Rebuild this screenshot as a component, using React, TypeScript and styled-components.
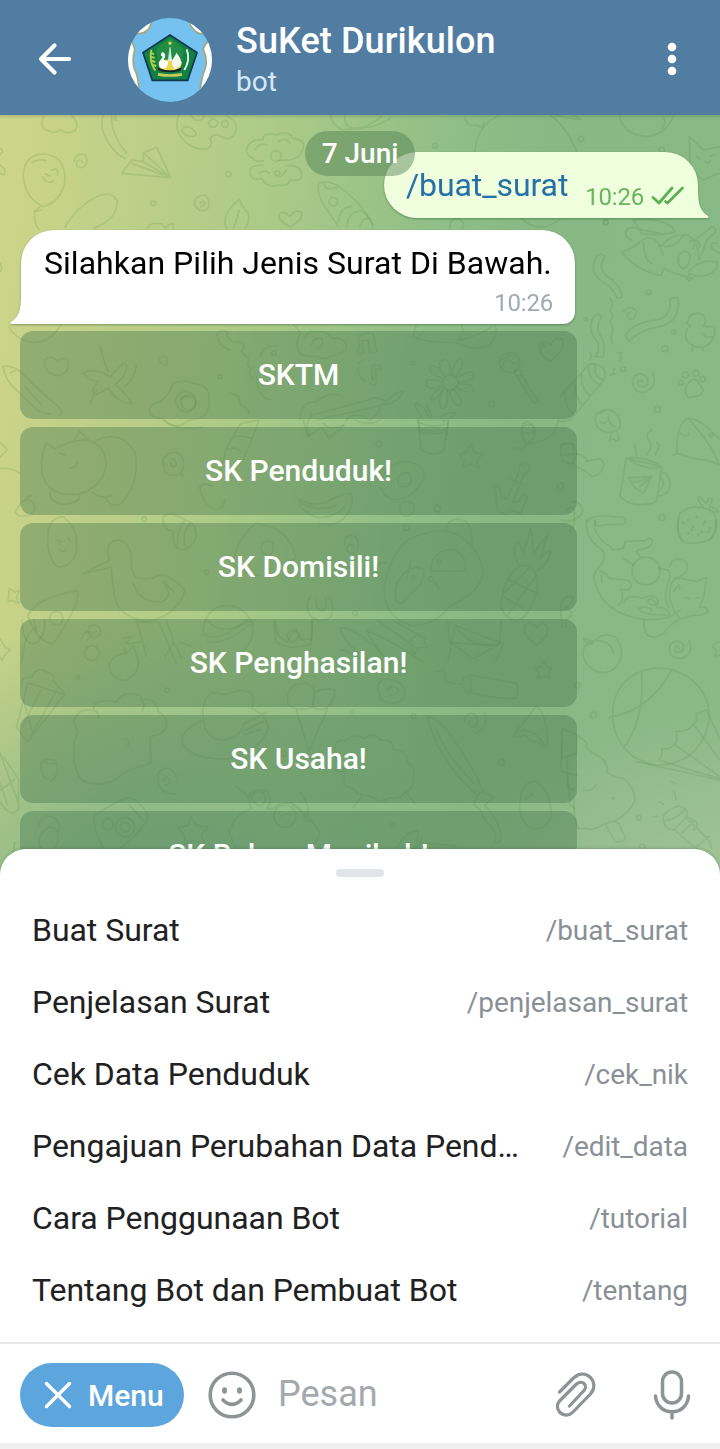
import React from 'react';
import styled, { createGlobalStyle } from 'styled-components';

const GlobalStyle = createGlobalStyle`
  * { box-sizing: border-box; }
  html, body { margin: 0; padding: 0; background: #fff; }
  body { font-family: Roboto, 'Noto Sans', sans-serif; overflow: hidden; }
`;

const Screen = styled.main`
  width: 720px;
  height: 1449px;
  display: flex;
  flex-direction: column;
  overflow: hidden;
  background: #fff;
`;

/* ---------- header ---------- */

const Header = styled.header`
  height: 115px;
  flex: none;
  display: flex;
  align-items: flex-start;
  background: #517da2;
  color: #fff;
  padding: 18px 36px 0 36px;
`;

const BackIcon = styled.svg`
  width: 38px;
  height: 38px;
  margin: 22px 54px 0 0;
`;

const Avatar = styled.svg`
  width: 84px;
  height: 84px;
  border-radius: 50%;
`;

const Heading = styled.div`
  flex: 1;
  margin-left: 24px;
`;

const Title = styled.h1`
  margin: 1px 0 0;
  font-size: 36px;
  line-height: 44px;
  font-weight: 500;
  letter-spacing: 0.1px;
`;

const Status = styled.div`
  font-size: 28px;
  line-height: 38px;
  color: #d5e8f7;
`;

const DotsIcon = styled.svg`
  width: 24px;
  height: 40px;
  margin-top: 21px;
`;

/* ---------- chat ---------- */

const Chat = styled.section`
  position: relative;
  height: 766px;
  margin-bottom: -32px;
  flex: none;
  display: flex;
  flex-direction: column;
  padding-top: 37px;
  overflow: hidden;
  background:
    linear-gradient(180deg, rgba(0, 0, 0, 0.12), rgba(0, 0, 0, 0) 4px),
    radial-gradient(ellipse 330px 220px at 760px 800px, rgba(176, 200, 160, 0.85), rgba(160, 194, 146, 0) 100%),
    radial-gradient(ellipse 330px 300px at 130px 800px, rgba(118, 175, 136, 0.9), rgba(130, 180, 134, 0) 100%),
    linear-gradient(97deg, #ccd68a 0%, #c6d288 9%, #aecb88 32%, #90bf87 55%, #88b884 68%, #89b985 100%);
`;

const Wallpaper = styled.svg`
  position: absolute;
  left: 0;
  top: 0;
  width: 720px;
  height: 754px;
  fill: none;
  stroke: #48823c;
  stroke-opacity: 0.16;
  stroke-width: 1.7px;
  stroke-linecap: round;
  stroke-linejoin: round;
  path, circle, ellipse { vector-effect: non-scaling-stroke; }
`;

const DatePill = styled.div`
  position: absolute;
  top: 16px;
  left: 305px;
  width: 110px;
  height: 45px;
  border-radius: 23px;
  background: rgba(74, 122, 80, 0.44);
  color: #fff;
  font-size: 28px;
  font-weight: 500;
  line-height: 45px;
  text-align: center;
  z-index: 2;
`;

const MessageRow = styled.div<{ $out?: boolean }>`
  position: relative;
  display: flex;
  align-items: flex-end;
  justify-content: ${p => (p.$out ? 'flex-end' : 'flex-start')};
  padding: ${p => (p.$out ? '0 11px 0 0' : '0 0 0 10px')};
  margin-bottom: ${p => (p.$out ? 12 : 7)}px;
  filter: drop-shadow(0 1px 1px rgba(40, 80, 40, 0.45));
`;

const Tail = styled.svg`
  width: 11px;
  height: 30px;
  flex: none;
`;

const OutBubble = styled.div`
  width: 314px;
  height: 66px;
  border-radius: 33px 33px 0 33px;
  background: #effedd;
  display: flex;
  align-items: flex-end;
  padding: 0 13px 0 22px;
`;

const Command = styled.span`
  font-size: 32px;
  line-height: 66px;
  letter-spacing: -0.1px;
  color: #2670a8;
  flex: 1;
`;

const SentTime = styled.span`
  font-size: 24px;
  line-height: 42px;
  letter-spacing: -0.2px;
  color: #6bb45e;
`;

const Checks = styled.svg`
  width: 34px;
  height: 20px;
  margin: 0 0 12px 7px;
`;

const InBubble = styled.div`
  width: 554px;
  height: 94px;
  border-radius: 33px 33px 12px 0;
  background: #fff;
  display: flex;
  flex-direction: column;
  padding: 14px 22px 0 23px;
`;

const MessageText = styled.p`
  margin: 0;
  font-size: 32px;
  line-height: 38px;
  letter-spacing: 0.03px;
  color: #000;
  white-space: nowrap;
`;

const ReceivedTime = styled.span`
  align-self: flex-end;
  font-size: 24px;
  line-height: 28px;
  letter-spacing: -0.2px;
  margin-top: 7px;
  color: #a1aab3;
`;

const Keyboard = styled.div`
  position: relative;
  display: flex;
  flex-direction: column;
  gap: 8px;
  width: 557px;
  margin-left: 20px;
`;

const KeyboardButton = styled.button`
  height: 88px;
  flex: none;
  border: 0;
  border-radius: 13px;
  background: rgba(74, 122, 80, 0.42);
  color: #fff;
  font-family: inherit;
  font-size: 30px;
  font-weight: 500;
  padding: 0 0 2px;
`;

/* ---------- bot command sheet ---------- */

const Sheet = styled.section`
  position: relative;
  z-index: 3;
  height: 493px;
  flex: none;
  border-radius: 26px 26px 0 0;
  background: #fff;
  box-shadow: 0 -1px 3px rgba(40, 80, 50, 0.25);
  display: flex;
  flex-direction: column;
`;

const Handle = styled.div`
  width: 48px;
  height: 8px;
  border-radius: 4px;
  background: #e1e4e8;
  margin: 20px auto 17px;
`;

const CommandRow = styled.div`
  height: 72px;
  display: flex;
  align-items: center;
  justify-content: space-between;
  padding: 0 32px;
`;

const CommandName = styled.span`
  font-size: 32px;
  letter-spacing: -0.04px;
  color: #212121;
  white-space: nowrap;
`;

const CommandSlug = styled.span`
  font-size: 28px;
  letter-spacing: -0.06px;
  color: #8a9096;
  white-space: nowrap;
`;

/* ---------- composer ---------- */

const Composer = styled.footer`
  height: 107px;
  flex: none;
  position: relative;
  z-index: 3;
  display: flex;
  align-items: flex-start;
  border-top: 2px solid #e6e7e9;
  border-bottom: 6px solid #f0f0f0;
  background: #fff;
  padding: 19px 20px 0;
`;

const MenuButton = styled.button`
  width: 164px;
  height: 64px;
  border: 0;
  border-radius: 32px;
  background: #5da5dd;
  color: #fff;
  display: flex;
  align-items: center;
  font-family: inherit;
  font-size: 30px;
  font-weight: 500;
  padding: 0 0 0 24px;
  gap: 16px;
`;

const CrossIcon = styled.svg`
  width: 28px;
  height: 28px;
`;

const SmileIcon = styled.svg`
  width: 48px;
  height: 48px;
  margin: 8px 0 0 24px;
`;

const Placeholder = styled.span`
  flex: 1;
  margin-left: 22px;
  font-size: 36px;
  line-height: 62px;
  color: #a4a9ad;
`;

const ClipIcon = styled.svg`
  width: 44px;
  height: 50px;
  margin: 7px 0 0;
`;

const MicIcon = styled.svg`
  width: 40px;
  height: 52px;
  margin: 6px 8px 0 54px;
`;

/* ---------- wallpaper doodles ---------- */

interface DoodleGroup {
  x: number;
  y: number;
  scale: number;
  paths: string[];
  dots: [number, number, number][];
}

const doodles: DoodleGroup[] = [
  {
    x: 0, y: 110, scale: 1 / 3,
    paths: [
      // cloud, sleeping moon, palette
      'M130 20 Q118 55 140 60 Q165 75 180 58 Q200 75 225 62 Q240 40 215 18',
      'M310 15 Q295 60 330 105 Q350 135 375 145 M335 15 Q330 70 380 130 M340 25 Q355 40 345 18',
      'M535 18 Q520 60 555 95 Q590 125 625 115 Q640 100 630 88 Q640 65 665 80 Q690 95 705 70 Q720 35 680 18 M545 60 Q560 40 580 60 Q600 75 575 80 Q555 80 545 60 M575 15 Q580 35 600 30 Q615 25 610 15 M625 40 Q640 15 655 38 Q650 55 630 50Z',
      // balloon with a face
      'M70 200 Q70 135 130 132 Q195 135 195 210 Q185 275 130 290 Q75 265 70 200Z M95 158 Q115 145 138 152 M135 192 L150 197 M155 180 Q178 170 172 196 M128 202 Q140 222 160 214 M120 290 L102 305 L125 300 M105 300 Q100 345 118 358',
      'M222 155 Q230 125 255 135 Q270 160 250 172 Q225 175 230 155 Q240 145 248 157',
      // paper plane
      'M365 190 L395 150 L430 155 L430 128 L470 112 L512 203 L365 190Z M430 128 L512 203 M395 160 L512 203 M430 155 L512 203',
      // flowers
      'M760 145 Q725 130 750 100 Q770 85 788 90 Q790 65 830 75 Q865 60 880 85 Q920 90 908 120 Q895 150 865 150 L835 152 M790 152 Q765 158 760 145 M765 120 Q780 95 800 105 M835 95 Q860 80 870 100 M790 165 Q745 165 750 190 Q755 215 785 205 Q800 235 835 225 Q865 230 870 210 Q910 215 905 190 Q895 160 860 168 M780 190 Q795 175 808 190 M840 200 Q855 190 860 180',
      'M990 15 Q1000 50 1030 60 M1035 15 Q1030 50 1060 55 Q1100 55 1145 20 M1030 58 Q1120 60 1170 25',
      'M195 350 Q230 290 290 260 Q340 240 352 275 Q350 330 280 355',
      'M583 285 Q583 255 615 255 Q635 275 622 298 Q600 310 583 285 M600 280 Q605 268 615 280 Q612 290 602 290',
      'M680 355 Q660 315 718 268 Q725 290 745 310 Q750 340 735 355 M700 355 Q710 330 718 300',
      'M870 350 Q830 330 838 312 Q852 300 870 320 Q885 295 905 308 Q910 330 870 350Z',
      'M955 225 Q950 255 975 290 L1015 350 M955 225 Q965 205 1010 225 Q1080 270 1120 345 M970 218 Q975 245 1010 232 M1015 335 Q1020 290 1055 290 M1040 350 Q1045 305 1075 305 M1080 350 Q1085 325 1105 325',
      'M0 115 Q15 120 0 135 M0 165 Q25 185 10 195 L0 190 M0 460 Q10 475 0 485',
      'M440 358 Q450 335 485 342 L500 358 M500 350 Q525 330 520 358',
      // under the received message
      'M25 650 Q50 690 95 697 Q150 700 182 645 M140 780 Q125 750 145 742 Q165 740 170 755 Q195 735 205 755 Q210 785 180 797 Q150 795 140 780',
      'M8 770 Q30 765 55 780 L180 895 Q190 905 180 915 M8 770 Q15 800 30 820 L105 895 Q120 910 150 912 M30 790 L50 778 M75 830 L125 885 M90 815 L150 870',
      'M300 710 Q310 750 325 785 M250 790 Q280 770 330 800 L370 760 Q390 760 370 800 L345 825 Q360 830 395 880 Q360 885 325 835 L285 855 Q270 840 295 815 Q260 810 250 790 M410 765 Q400 810 375 830 M290 840 L270 878',
      'M485 760 Q470 745 490 738 Q510 745 500 762 Q495 775 485 760',
      'M450 910 Q440 885 480 875 Q505 860 520 820 Q550 805 580 820 Q625 825 628 860 Q630 910 600 925 Q570 925 545 945 Q510 955 490 925 Q460 925 450 910 M525 875 Q535 840 565 845 Q595 860 585 890 Q565 915 540 900Z M540 870 Q550 850 565 862',
      'M650 680 Q655 655 680 665 Q685 700 710 695 Q745 700 725 725 Q735 740 750 745 Q735 770 755 775 Q740 795 760 805 M690 850 Q720 850 720 885 Q750 895 745 910 M780 740 Q790 700 835 710 M770 800 Q770 860 815 870 M650 680 Q660 710 690 720',
    ],
    dots: [[828, 138, 16], [685, 193, 8], [460, 280, 7], [832, 190, 7], [1000, 275, 13], [565, 878, 22], [675, 42, 10], [822, 730, 7], [660, 800, 6]],
  },
  {
    x: 360, y: 0, scale: 1 / 3,
    paths: [
      'M345 455 Q350 375 420 345 M570 345 Q620 380 650 455 M315 350 Q320 385 350 375 Q370 390 372 365 M585 345 Q620 355 662 358 L640 345',
      'M778 345 Q785 400 855 410 Q920 405 942 345 M905 345 Q925 365 905 385',
      'M988 410 L1030 450 L1080 440 M988 410 L990 490 Q1000 530 1030 540 L1075 520 M1010 470 L1018 476 M1050 470 L1065 465 M1035 485 Q1045 495 1052 482',
      'M270 690 Q265 655 295 655 Q320 670 305 690 M485 655 Q510 685 560 680 L600 660 M0 630 Q35 650 40 690',
    ],
    dots: [[225, 437, 7], [663, 417, 8], [905, 450, 8], [738, 667, 7]],
  },
  {
    x: 560, y: 200, scale: 1 / 3,
    paths: [
      // dog with a stick
      'M185 155 Q210 150 235 130 Q270 95 295 130 L310 165 M185 155 Q230 215 305 226 L310 205 Q350 225 400 235 M250 130 Q255 185 275 190 M195 95 Q210 75 240 88 L300 100 M215 120 Q190 110 200 90 M220 60 L245 100 Q300 110 345 95 M220 60 Q310 50 343 90 M310 130 Q340 100 385 105 Q415 125 418 180 M300 135 Q340 150 370 108 M355 170 Q350 200 370 205 Q390 200 390 165 Q380 145 365 160 Q350 155 358 180 M390 125 Q415 110 420 140 M425 165 L440 120 L468 95 Q465 75 450 85 L410 115 L400 145 M385 215 Q420 175 470 185 Q480 210 440 225 Q400 235 385 215 M455 145 Q450 125 470 130 M455 145 L480 160 M378 235 L390 220 M380 235 L388 243 L396 235',
      // ribbons
      'M110 168 Q85 210 120 240 Q160 262 172 295 L187 292 Q180 250 140 228 Q110 200 134 172 Q125 155 110 168Z',
      'M150 295 Q165 315 150 330 Q165 350 150 365 Q165 385 155 400 Q150 415 158 430',
      'M104 348 Q75 385 115 430 Q120 455 105 470 L130 470 Q140 430 115 395 Q110 370 126 350 Q115 338 104 348Z',
      'M330 297 Q335 350 290 360 Q225 365 195 405 L207 423 Q250 385 300 380 Q360 365 355 297 Q340 288 330 297Z',
      'M190 335 Q215 310 230 335 Q225 365 205 355 Q195 340 212 338',
      // chick
      'M390 375 L380 370 L386 360 C388 335 435 330 437 362 Q437 372 430 378 C445 385 455 375 463 380 C470 405 455 440 420 442 C385 440 370 415 380 390 Q384 382 392 378 M426 400 Q435 415 460 410 M398 440 L397 454 M428 440 L430 452',
      // party popper
      'M0 590 L85 495 Q105 485 130 505 Q145 530 120 555 L30 660 L0 665 M85 495 Q85 540 120 555 M65 520 Q60 565 90 585 M45 545 Q45 600 70 615 M15 580 Q15 630 45 645 M105 495 Q100 530 130 540',
      'M170 460 L185 458 L180 470 Q192 475 178 483 M90 478 Q98 460 90 460 M150 525 L165 520 M165 505 L160 513',
      'M278 518 C292 550 270 578 245 577 C215 572 210 538 228 526 C248 515 268 530 262 550 C256 566 232 562 233 547 C236 536 248 538 247 546',
      // paw
      'M375 570 Q390 530 410 540 L430 570 Q425 590 400 590 Q380 600 375 570Z',
      // rattle
      'M105 660 Q105 630 145 628 Q185 640 180 680 Q165 700 140 697 Q108 690 105 660Z M120 640 L145 628 M145 650 Q145 670 165 680 M120 665 Q130 675 140 665 M155 697 L148 722 L160 715 L168 724 L178 718 L170 695',
      // mug
      'M198 775 L305 800 L290 905 Q220 930 180 890 L198 775 Q250 765 305 800 M210 780 Q250 810 300 802 M303 815 Q330 820 330 855 Q325 890 292 888 M305 835 Q320 850 295 875 M225 735 L230 768 M275 690 Q250 705 270 725 Q280 745 258 765 M290 725 L298 740 L285 765 M205 833 L275 830 L250 880 L222 860 L205 833 M275 830 L215 850 M240 860 L275 830',
      // hat
      'M340 765 L352 760 Q345 690 375 660 Q395 645 440 680 L480 720 M352 760 L400 775 Q450 780 480 795 M385 655 Q460 740 475 790 M362 700 Q380 715 388 700',
      // strawberry
      'M360 940 Q400 905 460 935 Q480 975 450 1020 M360 940 Q345 980 365 1020 M430 920 Q405 895 420 890 L440 912 Q445 885 458 900 L448 920 Q475 925 475 935 L450 935',
      'M0 765 L50 762 Q80 765 80 785 Q130 765 132 795 Q120 830 95 830 Q75 810 50 800 M0 740 Q15 720 40 735 L40 765',
      'M0 960 Q60 970 68 930 Q60 905 40 905 M20 930 Q40 910 45 940',
      'M80 965 Q95 945 140 948 L190 952 Q205 965 190 972 L130 975 Q105 985 105 960',
    ],
    dots: [[266, 277, 7], [341, 396, 6], [315, 446, 9], [292, 628, 9], [306, 953, 9], [77, 358, 5], [137, 68, 7], [376, 525, 9], [408, 520, 9], [428, 537, 8], [363, 548, 7], [190, 508, 7], [453, 705, 5], [385, 960, 2], [410, 950, 2], [435, 965, 2], [395, 990, 2], [425, 995, 2], [450, 985, 2]],
  },
  {
    x: 560, y: 520, scale: 1 / 3,
    paths: [
      // curled cat
      'M80 0 Q75 55 120 85 Q145 105 120 140 Q90 165 110 200 Q130 270 230 295 Q320 310 360 270 M105 0 Q95 45 150 80 L160 90 L190 85 L195 65 L255 62 Q270 45 278 65 Q275 85 235 90 L230 95 L240 110 M120 155 Q125 150 150 175 L200 180 Q225 195 205 210 L180 208 M125 165 L125 188 M190 115 L220 135 M295 145 L325 150 Q335 165 322 200 Q310 230 325 260 M330 140 Q335 112 370 118 Q395 140 370 165 L345 175 M345 175 Q360 172 375 178 L410 185 L440 172 L432 225 Q430 240 420 255 M345 175 Q325 195 330 240 Q345 285 362 297 L400 285 Q420 290 445 275 Q440 255 420 262 M355 195 L360 208 M340 215 L352 200 M375 232 L388 236 M408 235 L415 232 M360 297 Q320 320 310 340 Q280 360 262 345 Q250 330 252 300 M175 255 Q195 240 185 215 M190 250 Q200 220 250 235 Q290 215 295 250 Q270 265 262 240 Q285 230 290 262 Q330 260 328 290 M235 265 Q240 285 325 285 M235 265 L260 260 L275 270',
      // strawberry base
      'M355 0 Q345 50 375 68 Q420 75 455 55 Q475 30 468 0',
      // peach
      'M70 355 Q95 365 105 362 Q130 335 165 350 Q190 375 183 415 Q170 455 130 458 Q75 450 68 400 Q70 370 105 362 Q150 360 160 398 M70 355 Q80 375 98 370',
      'M388 362 C400 395 380 417 355 415 C325 410 322 380 338 368 C358 358 376 372 370 388 C362 402 342 398 344 385 C348 376 358 378 356 386',
      'M480 365 L465 370 L458 382 L470 390 L465 408 L480 405',
      // striped ball
      'M158 580 C160 500 215 445 300 444 C390 450 448 515 448 590 C440 670 390 735 290 735 C210 725 155 660 158 580Z M245 455 Q255 600 190 685 M333 453 Q270 570 148 592',
      // balloon basket edge and ropes
      'M440 570 L408 580 Q415 605 400 612 Q390 635 348 635 Q355 665 340 675 Q330 690 305 685 Q310 710 295 722 M440 570 L480 660 M400 612 L480 720 M345 675 L480 770 M230 725 L480 780 M305 722 Q350 740 480 775',
      // tree
      'M5 625 Q60 645 80 670 Q75 690 110 705 Q150 730 140 755 Q160 775 190 775 Q225 800 225 840 Q210 880 160 905 L135 910 Q100 935 75 925 L55 925 Q40 900 42 840 M5 625 L5 715 L50 700 L50 645 M22 720 L22 800 L42 810 M70 810 Q95 815 108 795 M135 910 L165 965 Q185 970 197 955 L175 910 Q165 900 150 907',
      // flashlight
      'M310 900 Q305 875 355 858 Q385 865 382 885 L372 900 L340 930 Q315 930 310 900Z M318 900 Q340 905 372 870 M382 890 L410 905 L412 920 L400 930 M345 930 Q380 965 410 985 M382 895 L450 965 L455 985 M365 940 L400 905 M410 980 L445 950 M335 785 L345 790 M343 815 L348 838 M298 845 L310 852 M278 890 L292 890',
    ],
    dots: [[258, 153, 42], [52, 496, 8], [100, 585, 9], [237, 893, 7], [160, 835, 2], [247, 980, 8], [370, 10, 2], [400, 20, 2], [430, 12, 2], [385, 40, 2], [415, 45, 2], [445, 35, 2]],
  },
  {
    x: 0, y: 420, scale: 0.37,
    paths: [
      // curled up cat
      'M125 62 L148 78 Q200 50 240 55 C290 70 300 130 265 170 C235 205 180 210 145 190 C105 165 105 110 125 62 M200 55 L215 30 L240 55 M160 90 L175 95 M190 130 Q205 130 210 115 M260 55 Q330 25 365 90 Q380 160 330 225 Q300 240 285 210 M250 195 Q270 215 300 205 M135 195 Q130 220 170 228 Q215 225 215 205',
      'M440 110 Q450 80 485 90 Q505 110 490 145 Q460 155 445 140Z M465 105 Q480 110 475 125 Q460 130 462 115 M440 115 L450 120 M485 145 L495 150',
      'M0 60 L20 80 L0 100 M0 130 Q40 130 55 145 M40 250 L60 220 Q90 205 95 240 Q85 265 50 258Z M70 210 L85 205',
      // wizard sleeve
      'M610 80 L650 10 L700 0 M610 80 Q600 130 590 150 M700 0 Q680 60 655 110 L640 125 M615 80 Q640 70 650 85 M630 45 Q655 40 680 50 M540 180 Q550 165 575 180 M540 180 Q545 225 580 242 Q605 240 608 215',
      // bananas
      'M810 215 Q850 240 895 215 Q930 195 950 200 Q960 230 930 265 Q905 290 860 280 M810 215 Q805 240 850 262 Q900 270 930 235 M815 225 Q860 250 910 230 M440 0 Q480 30 545 20',
      // pot
      'M1130 0 L1138 80 Q1175 105 1200 80 L1212 5 M1130 30 Q1170 45 1210 30 M1135 8 Q1170 25 1212 8 M820 0 L830 45 L870 20 L890 50 L930 15 M1030 165 Q1050 110 1100 112 Q1150 120 1145 160 Q1120 205 1080 215 Q1035 215 1030 180 M1075 165 Q1080 135 1105 145 Q1120 165 1100 180 Q1075 185 1075 165',
      'M1240 92 L1262 88 L1272 62 L1282 88 L1305 92 L1290 108 L1295 130 L1272 118 L1250 128 L1255 108Z',
      // anchor
      'M1403 140 C1398 120 1420 108 1430 122 C1436 136 1425 144 1416 146 L1386 222 C1402 225 1410 212 1412 200 L1425 208 L1408 252 L1385 245 L1370 255 L1345 247 L1336 172 L1352 186 C1350 205 1358 214 1370 214 L1403 140 M1380 160 L1415 175',
      'M1385 75 Q1410 85 1425 65 Q1405 45 1410 20 Q1430 5 1445 20 Q1450 50 1425 65 Q1480 60 1500 30 L1510 0 M1515 80 Q1510 60 1550 65 L1560 90 L1545 120 L1520 110Z',
      // egg with a face, bee, shark
      'M130 310 Q130 265 170 262 Q215 290 205 360 Q190 400 155 397 Q125 370 130 310 M155 325 L165 330 M185 318 L190 328 M160 350 Q170 360 178 350',
      'M440 265 Q445 250 470 255 L520 280 Q540 310 520 335 Q495 360 475 345 Q465 320 470 300 Q440 300 440 265 M480 345 Q475 300 500 270 M500 340 Q490 300 515 280',
      'M630 385 Q640 320 690 280 Q780 285 800 375 L770 385 L780 400 M630 385 Q640 410 700 420 M705 345 Q710 320 735 330 Q745 350 730 365 Q705 365 705 345',
      'M930 340 Q930 305 960 315 Q980 345 955 360 Q930 360 940 340 Q955 330 955 345',
      // duck
      'M225 415 L295 380 Q280 320 325 325 Q360 335 355 400 L365 425 Q400 435 430 420 Q450 410 500 460 Q480 530 395 545 Q320 530 310 480 L300 400 M225 415 L300 398 M360 440 Q380 500 440 490 Q470 475 440 435 M440 435 L470 465',
      // panda
      'M1040 440 Q1060 350 1110 320 Q1170 295 1210 300 Q1300 330 1305 420 Q1290 470 1220 500 Q1170 560 1110 555 Q1030 530 1040 440 M1205 300 Q1205 270 1240 268 Q1280 275 1275 330 M1045 385 Q1010 385 1020 415 M1165 390 Q1180 345 1230 350 Q1270 380 1255 410 Q1200 405 1165 410Z M1080 430 Q1110 385 1145 405 Q1150 440 1110 470 Q1080 510 1070 485 Q1065 450 1080 430 M1170 440 Q1190 445 1185 460 M1110 380 L1100 430',
      // pineapple
      'M1355 490 C1360 440 1385 400 1415 392 C1445 395 1460 425 1450 465 C1440 510 1415 542 1392 542 C1370 538 1352 520 1355 490 M1372 430 L1452 470 M1358 475 L1430 520 M1370 530 L1450 420 M1360 470 L1430 400 M1405 395 C1385 370 1388 335 1400 328 L1415 360 L1435 290 L1442 360 L1480 310 L1460 375 Q1480 352 1490 355 Q1480 390 1452 408',
      'M1540 300 Q1560 280 1550 250 M1520 490 Q1530 470 1550 480 Q1545 500 1525 510 Q1545 510 1545 530 Q1525 540 1530 560 M1515 490 L1518 560 M75 530 Q95 480 210 462 Q220 490 145 605 Q100 600 75 530 M90 540 L105 590',
      'M25 455 L40 465 L52 460 L45 480 L50 495 L35 488 L22 490Z',
      // burger
      'M550 580 Q545 530 590 505 Q650 490 680 545 Q695 590 650 630 M550 580 Q590 600 640 560 L675 535 M560 600 Q610 610 690 540 M840 475 Q820 505 840 530 Q870 555 895 530 Q905 500 890 480 M855 485 Q850 515 875 515 Q885 500 880 482',
      'M370 545 L430 548 L475 655 M370 545 Q385 590 395 640 M220 590 Q230 565 245 575 M235 595 L260 570 M330 590 L355 585 L340 605 L380 600 M60 655 Q65 570 100 560',
      'M742 540 M745 540 L750 580 L775 600 L800 565 L815 595 L845 590 L842 540 M920 620 Q960 630 985 655 M990 570 Q1050 590 1145 655 M990 570 Q1020 620 1050 655 M1210 655 L1230 555 L1360 605 L1340 655 M1230 555 Q1270 620 1355 605',
    ],
    dots: [[1100, 240, 20], [1182, 240, 9], [1098, 290, 8], [1024, 65, 8], [1165, 430, 6], [1118, 427, 5], [1185, 383, 5], [558, 412, 6], [390, 268, 6], [248, 630, 20], [960, 522, 6], [1515, 178, 8], [152, 535, 18]],
  },
  {
    x: 0, y: 620, scale: 0.37,
    paths: [
      'M60 0 Q60 60 90 65 Q125 50 120 0 M450 0 L470 60 L445 100 M470 60 L490 100 M485 60 L515 70',
      // fruit, popcorn tub
      'M295 125 Q300 95 340 90 L360 70 L370 95 Q385 140 340 163 Q300 160 295 125 M340 90 L335 75',
      'M60 180 Q55 150 85 155 Q100 125 125 140 Q150 145 145 165 L175 200 L75 330 L45 290 L75 170 M75 170 L170 200 M65 220 L90 310 M110 190 L60 290 M150 195 L80 320',
      // chef hat
      'M210 300 C185 265 215 235 255 245 C245 215 290 215 315 222 C325 195 375 190 385 215 C415 210 430 235 425 245 C465 270 455 310 405 315 L408 385 C385 395 350 400 320 425 C290 450 230 448 215 425 C195 390 195 340 210 300 M340 320 Q355 330 345 340 M255 245 Q270 250 265 265 M380 215 Q395 225 385 245',
      // frog
      'M550 270 Q540 220 575 195 Q600 200 610 200 L650 190 Q690 190 685 225 L680 240 Q720 255 725 290 Q710 350 620 375 Q530 380 495 340 Q480 300 550 270 Q555 320 600 325 Q650 320 660 280 L720 250 M660 300 L710 275 M660 310 L705 295',
      // ice cream
      'M780 230 Q770 185 800 175 Q840 160 850 195 L845 235 Q810 250 780 230 M850 195 Q880 180 905 190 Q905 220 880 240 M800 240 L835 355 L885 240 M845 235 Q860 245 880 240 M560 0 Q600 50 680 0 M740 0 L745 60 Q790 85 840 65 L845 0 M775 45 Q790 15 810 40 Q805 60 785 58Z',
      'M920 20 Q925 60 985 100 L1040 140 M920 20 Q960 25 1010 70 L1060 120 M1020 0 L1130 80 M1060 0 L1150 50 M1095 70 L1125 40 M1110 75 L1120 92 L1135 75 L1155 75 L1145 55 M1020 180 Q1030 150 1070 165 Q1105 180 1090 215 Q1060 235 1030 215Z M1045 190 Q1055 175 1075 185 Q1080 200 1055 205',
      'M1210 0 L1215 60 L1280 105 L1350 65 L1355 0 M1215 60 L1330 70 M1450 68 Q1410 40 1418 15 Q1435 0 1450 20 Q1465 0 1480 18 Q1485 45 1450 68',
      'M1250 180 Q1245 150 1275 150 L1395 170 Q1405 190 1395 210 Q1370 218 1260 195Z M1175 140 L1200 135 L1205 165 L1245 175 M1270 150 L1275 195',
      'M1445 130 L1462 128 L1470 112 L1477 128 L1492 130 L1482 142 L1485 158 L1470 152 L1452 158 L1457 142Z',
      // sheep
      'M905 360 Q900 320 935 325 Q955 305 985 320 Q1010 300 1030 325 Q1060 320 1065 350 Q1105 355 1100 385 Q1130 400 1115 425 Q1125 450 1095 465 Q1080 490 1050 480 Q1030 500 1010 480 L970 470 Q950 450 935 450 Q925 420 935 405 Q910 400 905 360 M890 380 Q885 410 930 410 M975 480 L955 505 M1100 465 L1120 495',
      // paintbrush
      'M1155 260 Q1175 350 1245 430 L1290 475 L1305 460 Q1270 380 1210 300 Q1180 265 1155 260 M1180 300 Q1210 370 1280 440 M1290 475 L1280 500 L1295 510 Q1310 540 1335 570 Q1345 590 1335 600 Q1355 605 1355 585 Q1350 540 1310 500 L1335 480 L1305 465',
      'M1255 275 Q1260 245 1285 255 Q1300 280 1280 290 Q1260 285 1270 272 M1310 250 Q1320 295 1285 305',
      // bell, egg
      'M1385 315 Q1420 270 1450 232 Q1480 260 1480 335 Q1470 345 1455 330 Q1430 330 1420 310 Q1400 320 1385 315 M1400 300 Q1440 290 1470 335 M1405 490 Q1410 440 1445 435 Q1490 460 1490 530 Q1475 570 1435 563 Q1400 540 1405 490Z M1420 485 L1440 470',
      'M1520 330 L1515 410 L1560 420 M1535 420 L1540 500 L1555 510',
      'M110 390 Q115 370 150 380 Q165 410 140 435 Q110 430 110 390 M120 380 Q130 395 155 385',
      'M425 430 Q425 400 455 400 Q480 415 480 440 M425 430 Q430 470 475 470 M440 435 Q450 415 460 435 Q455 450 445 445',
      // camera
      'M255 530 Q310 490 345 480 Q370 480 400 525 Q400 560 320 620 Q290 640 275 610 Q250 560 255 530 M350 500 L385 540',
      'M480 560 L510 555 L515 530 L530 555 L562 560 L545 580 L550 605 L520 595 L495 608 L500 585Z M190 650 L202 648 L210 632 L217 650 L230 652 L220 662 L222 675 L207 668 L195 672Z',
      // astronaut
      'M620 570 Q640 520 680 510 Q660 475 690 460 L720 460 Q740 490 720 510 L740 510 Q755 490 790 495 Q820 510 825 540 Q860 550 865 580 Q850 620 800 630 Q790 655 740 660 Q690 665 665 640 Q630 620 620 570 M680 480 Q685 460 710 465 Q725 480 710 500 Q685 505 680 480 M760 530 Q770 520 785 528 M790 500 Q850 540 865 580 M810 465 Q840 500 830 530 M640 450 Q660 465 670 480',
      'M105 560 Q110 530 130 530 Q165 535 160 570 M105 600 Q110 565 135 560 Q160 560 158 595 Q150 625 125 625 Q105 620 105 600',
      'M1085 685 Q1060 620 1090 590 Q1110 570 1130 570 Q1130 600 1110 630 M1085 685 L1140 590 M1130 600 L1170 605 L1230 610 L1220 685 M955 685 Q940 650 960 630',
      'M0 50 L15 75 L28 80 L12 95 L5 110 L0 100 M0 360 L50 495 Q55 515 35 522 Q10 515 0 490 M0 440 L20 500 M10 370 L50 430 L50 500 M0 460 Q30 440 40 430',
      'M40 600 Q35 650 10 680',
    ],
    dots: [[452, 190, 6], [1118, 260, 6], [1355, 385, 8], [767, 362, 6], [435, 637, 6], [210, 155, 5], [952, 248, 5], [1060, 555, 6], [1460, 655, 7], [255, 30, 17], [292, 552, 15], [338, 560, 26], [338, 560, 13], [770, 530, 30]],
  },
  {
    x: 280, y: 320, scale: 1 / 3,
    paths: [
      // bear face
      'M40 15 Q60 30 60 40 Q45 70 55 95 Q75 115 110 108 Q130 125 155 108 Q200 100 200 75 Q190 50 155 55 Q145 35 120 35 Q80 30 75 55 M95 75 Q100 50 125 55 Q135 75 115 85',
      // notes
      'M235 50 Q255 35 280 40 L290 95 Q275 105 268 95 L265 62 L245 62 L250 98 Q238 108 232 95 L238 88 L235 50 M235 130 L250 120 M232 145 L240 170 L255 185 M270 190 Q285 205 290 185 L285 145 L305 150 L300 135 L275 135 L278 180',
      'M400 50 Q405 20 410 12 M400 50 Q450 70 530 68 L550 40 L545 12 M410 55 L430 35 M530 68 Q580 95 630 75 Q655 40 645 15 M540 60 Q590 50 635 20',
      // heart and lollipop
      'M810 123 Q775 105 778 75 Q795 55 812 75 Q825 45 848 58 Q855 95 810 123Z M785 85 Q790 70 800 80',
      'M665 120 L690 105 M665 140 Q680 110 695 125 Q700 135 712 125 M705 150 L725 150 L722 168 L705 165Z M710 168 L762 250 M725 165 L772 242 L762 252',
      // daisy in a pot
      'M495 170 C465 130 485 110 503 122 Q512 135 512 160 M518 160 C522 112 545 110 548 126 C548 142 540 155 530 168 M535 172 C575 142 590 160 578 174 C565 186 550 186 535 184 M535 190 C580 190 592 208 576 216 C555 220 540 210 528 200 M520 208 C552 240 548 256 534 256 C518 252 512 230 508 212 M502 212 C506 252 498 266 486 266 C474 256 480 230 490 206 M485 196 C450 215 436 200 438 186 C446 174 465 178 485 184 M486 174 C450 165 444 148 454 138 C472 136 482 150 494 166 M480 205 Q450 225 455 240 Q470 240 488 212',
      'M425 290 Q405 265 405 250 Q425 250 450 295 M440 285 L442 255 L455 290 M480 295 Q495 275 530 280 Q515 295 490 305 M412 300 L505 300 M415 300 L420 345 M505 300 L500 345 M412 325 Q460 340 505 325',
      'M60 300 Q65 240 110 245 Q150 210 190 230 M100 285 L265 240 M110 300 L330 250 M265 240 Q280 225 320 245 Q345 215 370 215 Q360 240 330 250 M95 285 Q70 320 90 350 M130 310 Q150 335 190 315 M200 300 Q220 270 270 300 Q300 280 305 250 M225 300 Q270 320 300 300',
      'M725 330 Q725 305 745 305 Q765 315 760 335 Q745 350 725 330',
    ],
    dots: [[400, 130, 6], [635, 252, 9], [511, 188, 23], [689, 128, 30]],
  },
];

const buttons = ['SKTM', 'SK Penduduk!', 'SK Domisili!', 'SK Penghasilan!', 'SK Usaha!', 'SK Belum Menikah!'];

const commands: [string, string][] = [
  ['Buat Surat', '/buat_surat'],
  ['Penjelasan Surat', '/penjelasan_surat'],
  ['Cek Data Penduduk', '/cek_nik'],
  ['Pengajuan Perubahan Data Pend…', '/edit_data'],
  ['Cara Penggunaan Bot', '/tutorial'],
  ['Tentang Bot dan Pembuat Bot', '/tentang'],
];

function Doodles() {
  return (
    <Wallpaper viewBox="0 115 720 754">
      {doodles.map((g, i) => (
        <g key={i} transform={`translate(${g.x} ${g.y}) scale(${g.scale})`}>
          {g.paths.map((d, j) => <path key={j} d={d} />)}
          {g.dots.map(([cx, cy, r], j) => <circle key={j} cx={cx} cy={cy} r={r} />)}
        </g>
      ))}
    </Wallpaper>
  );
}

function AvatarPicture() {
  return (
    <Avatar viewBox="0 0 252 252">
      <rect width="252" height="252" fill="#75c1f0" />
      <g fill="#fff" stroke="#a5a676" strokeWidth="5">
        <path d="M-10 60 Q18 70 20 95 Q12 125 18 150 Q32 175 32 215 L-10 220Z" />
        <path d="M262 60 Q230 70 226 95 Q240 125 232 150 Q222 175 216 215 L262 220Z" />
        <path d="M20 46 Q45 50 60 35 Q72 22 68 0 L10 0Z" />
        <path d="M232 46 Q210 50 198 35 Q182 22 184 0 L240 0Z" />
      </g>
      <path d="M126 51 L207 104 L179 187 L73 187 L45 104Z" fill="#118044" stroke="#0c3852" strokeWidth="5" />
      <path d="M126 60 L85 92 Q90 130 92 160 L162 160 Q164 120 167 92Z" fill="#238e43" />
      <path d="M70 95 Q62 130 82 158 M67 103 L78 109 M67 115 L80 120 M70 127 L82 132 M74 140 L85 144" stroke="#b5cb45" strokeWidth="6" fill="none" />
      <path d="M176 94 Q188 125 169 156" stroke="#e5f0df" strokeWidth="6" fill="none" />
      <path d="M92 132 Q126 116 162 132 L156 154 Q126 165 96 154Z" fill="#ead64c" />
      <path d="M88 148 Q126 166 162 148 L158 158 Q126 168 92 158Z" fill="#172a2c" />
      <path d="M99 113 Q99 99 108 104 Q116 112 107 124 Q110 130 120 130 Q122 151 103 152 Q84 142 99 124 Q108 114 99 113Z" fill="#fff" />
      <path d="M146 104 Q158 119 160 133 Q158 149 141 153 Q128 142 133 127Z" fill="#f4f7ee" />
      <path d="M126 88 L131 128 L121 128Z" fill="#d9edf2" stroke="#d9edf2" strokeWidth="2" />
      <path d="M126 68 L128 73 L133 74 L129 77 L131 82 L126 79 L121 82 L123 77 L119 74 L124 73Z" fill="#dfe75a" />
      <path d="M90 169 Q126 176 162 169" stroke="#c9ca5a" strokeWidth="8" fill="none" />
    </Avatar>
  );
}

export default function App() {
  return (
    <Screen>
      <GlobalStyle />
      <Header>
        <BackIcon viewBox="0 0 38 38" fill="none" stroke="#fff" strokeWidth="4.2" strokeLinecap="round" strokeLinejoin="round">
          <path d="M33 19H5M18.500 5.500L5 19L18.500 32.500" />
        </BackIcon>
        <AvatarPicture />
        <Heading>
          <Title>SuKet Durikulon</Title>
          <Status>bot</Status>
        </Heading>
        <DotsIcon viewBox="0 0 24 40" fill="#fff">
          <circle cx="12" cy="8" r="4.3" />
          <circle cx="12" cy="20" r="4.3" />
          <circle cx="12" cy="32" r="4.3" />
        </DotsIcon>
      </Header>

      <Chat>
        <Doodles />
        <DatePill>7 Juni</DatePill>
        <MessageRow $out>
          <OutBubble>
            <Command>/buat_surat</Command>
            <SentTime>10:26</SentTime>
            <Checks viewBox="0 0 34 20" fill="none" stroke="#5cb052" strokeWidth="2.8" strokeLinecap="round" strokeLinejoin="round">
              <path d="M2 11.500L8 17L21 2M14.500 15.500L16.500 17L31.500 2" />
            </Checks>
          </OutBubble>
          <Tail viewBox="0 0 11 30"><path d="M-1 0H0C0 16 2 23 10 28Q11.500 30 9 30H-1Z" fill="#effedd" /></Tail>
        </MessageRow>
        <MessageRow>
          <Tail viewBox="0 0 11 30"><path d="M12 0H11C11 16 9 23 1 28Q-.5 30 2 30H12Z" fill="#fff" /></Tail>
          <InBubble>
            <MessageText>Silahkan Pilih Jenis Surat Di Bawah.</MessageText>
            <ReceivedTime>10:26</ReceivedTime>
          </InBubble>
        </MessageRow>
        <Keyboard>
          {buttons.map(label => <KeyboardButton key={label}>{label}</KeyboardButton>)}
        </Keyboard>
      </Chat>

      <Sheet>
        <Handle />
        {commands.map(([name, slug]) => (
          <CommandRow key={slug}>
            <CommandName>{name}</CommandName>
            <CommandSlug>{slug}</CommandSlug>
          </CommandRow>
        ))}
      </Sheet>

      <Composer>
        <MenuButton>
          <CrossIcon viewBox="0 0 28 28" fill="none" stroke="#fff" strokeWidth="3.4" strokeLinecap="round">
            <path d="M2.500 2.500L25.500 25.500M25.500 2.500L2.500 25.500" />
          </CrossIcon>
          Menu
        </MenuButton>
        <SmileIcon viewBox="0 0 48 48" fill="none" stroke="#8e9396" strokeWidth="3.6" strokeLinecap="round">
          <circle cx="24" cy="24" r="21.800" />
          <path d="M15 29Q24 38 33 29" />
          <ellipse cx="16.500" cy="19.500" rx="2.500" ry="3.200" fill="#8e9396" stroke="none" />
          <ellipse cx="31.500" cy="19.500" rx="2.500" ry="3.200" fill="#8e9396" stroke="none" />
        </SmileIcon>
        <Placeholder>Pesan</Placeholder>
        <ClipIcon viewBox="0 0 44 50" fill="none" stroke="#8e9396" strokeWidth="3.2" strokeLinecap="round" strokeLinejoin="round">
          <path d="M5.500 22L19.500 8C25 3 31.500 3 36.500 7.500C41 12.500 41 19 36.500 24L18.500 42.500C15 46 9.500 46 6 42.500C2.500 39 2.500 34 6 30.500L22.500 14C25.500 11.500 28.500 12 30 13.500C32 15.500 32 18.500 30 20.500L15.500 36" />
        </ClipIcon>
        <MicIcon viewBox="0 0 40 52" fill="none" stroke="#8e9396" strokeWidth="3.500" strokeLinecap="round">
          <rect x="10.500" y="3" width="19" height="31" rx="9.500" />
          <path d="M3.500 27C5 48 35 48 36.500 27M20 43V49" />
        </MicIcon>
      </Composer>
    </Screen>
  );
}
